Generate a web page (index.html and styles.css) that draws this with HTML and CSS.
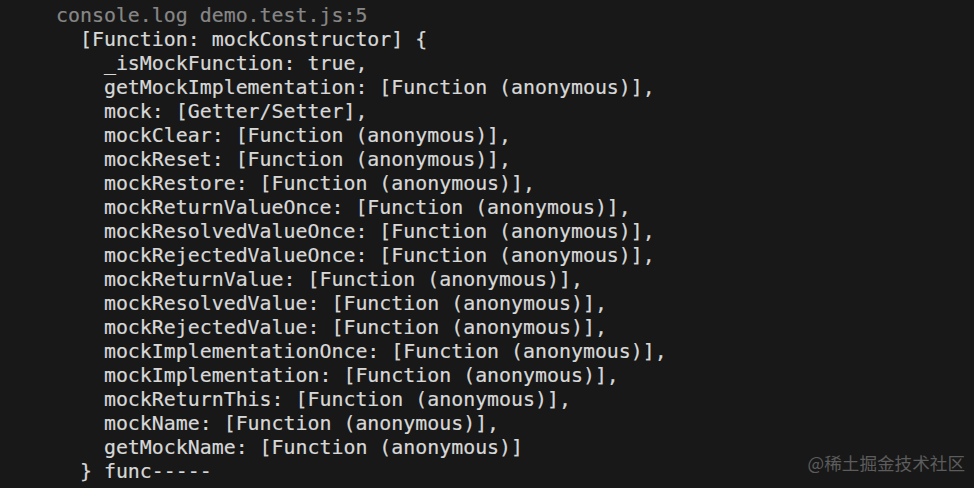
FILE: index.html
```html
<!DOCTYPE html>
<html>
<head>
<meta charset="utf-8">
<link rel="stylesheet" href="styles.css">
</head>
<body>
<div class="term">
<pre class="out"><span class="dim">console.log demo.test.js:5</span>
  [Function: mockConstructor] {
    _isMockFunction: true,
    getMockImplementation: [Function (anonymous)],
    mock: [Getter/Setter],
    mockClear: [Function (anonymous)],
    mockReset: [Function (anonymous)],
    mockRestore: [Function (anonymous)],
    mockReturnValueOnce: [Function (anonymous)],
    mockResolvedValueOnce: [Function (anonymous)],
    mockRejectedValueOnce: [Function (anonymous)],
    mockReturnValue: [Function (anonymous)],
    mockResolvedValue: [Function (anonymous)],
    mockRejectedValue: [Function (anonymous)],
    mockImplementationOnce: [Function (anonymous)],
    mockImplementation: [Function (anonymous)],
    mockReturnThis: [Function (anonymous)],
    mockName: [Function (anonymous)],
    getMockName: [Function (anonymous)]
  } func-----</pre>
<div class="mark">@稀土掘金技术社区</div>
</div>
</body>
</html>
```
FILE: styles.css
```css
html, body {
  margin: 0;
  padding: 0;
  background: #181818;
}
.term {
  position: relative;
  width: 974px;
  height: 488px;
  overflow: hidden;
  background: #181818;
}
.out {
  margin: 0;
  padding: 4px 0 0 56px;
  font-family: "DejaVu Sans Mono", "Liberation Mono", monospace;
  font-size: 19.9px;
  line-height: 24px;
  color: #d8d8d8;
  -webkit-text-stroke: 0.2px #d8d8d8;
}
.dim {
  color: #878787;
  -webkit-text-stroke: 0.2px #878787;
}
.mark {
  position: absolute;
  right: 9px;
  bottom: 14px;
  font-family: "Noto Sans CJK SC", "Noto Sans", sans-serif;
  font-size: 17.6px;
  line-height: 22px;
  color: #5c5c5c;
}
```
